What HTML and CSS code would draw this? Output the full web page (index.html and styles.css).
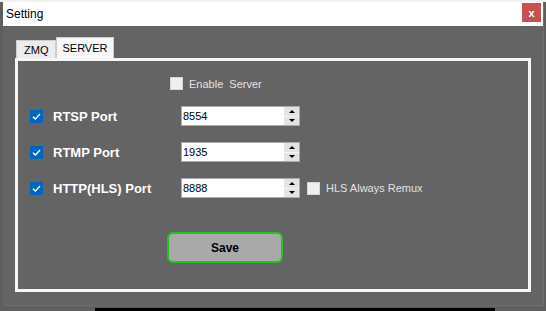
FILE: index.html
```html
<!DOCTYPE html>
<html lang="en">

<head>
    <meta charset="UTF-8">
    <title>Setting</title>
    <link rel="stylesheet" href="styles.css">
</head>

<body>
    <div class="desk-top"></div>
    <div class="window">
        <div class="titlebar">
            <span class="title">Setting</span>
            <div class="close">x</div>
        </div>
        <div class="content">
            <div class="tabs">
                <div class="tab">ZMQ</div>
                <div class="tab active">SERVER</div>
            </div>
            <div class="panel">
                <div class="enable-row">
                    <span class="check"></span>
                    <span class="opt-label">Enable&nbsp; Server</span>
                </div>
                <div class="row">
                    <span class="check on"><svg width="13" height="13" viewBox="0 0 13 13"><path d="M3 6.8 L5.4 9 L10 4" fill="none" stroke="#fff" stroke-width="1.4"/></svg></span>
                    <span class="port-label">RTSP Port</span>
                    <div class="spinbox">
                        <span class="value">8554</span>
                        <div class="spin"><span class="up"></span><span class="down"></span></div>
                    </div>
                </div>
                <div class="row">
                    <span class="check on"><svg width="13" height="13" viewBox="0 0 13 13"><path d="M3 6.8 L5.4 9 L10 4" fill="none" stroke="#fff" stroke-width="1.4"/></svg></span>
                    <span class="port-label">RTMP Port</span>
                    <div class="spinbox">
                        <span class="value">1935</span>
                        <div class="spin"><span class="up"></span><span class="down"></span></div>
                    </div>
                </div>
                <div class="row">
                    <span class="check on"><svg width="13" height="13" viewBox="0 0 13 13"><path d="M3 6.8 L5.4 9 L10 4" fill="none" stroke="#fff" stroke-width="1.4"/></svg></span>
                    <span class="port-label">HTTP(HLS) Port</span>
                    <div class="spinbox">
                        <span class="value">8888</span>
                        <div class="spin"><span class="up"></span><span class="down"></span></div>
                    </div>
                    <span class="check hls"></span>
                    <span class="opt-label">HLS Always Remux</span>
                </div>
                <button class="save">Save</button>
            </div>
        </div>
    </div>
    <div class="desk-bar"></div>
</body>

</html>
```

FILE: styles.css
```css
body,
html {
    margin: 0;
    padding: 0;
    width: 546px;
    height: 311px;
    overflow: hidden;
    background: #5f5f5f;
    font-family: "Liberation Sans", Arial, sans-serif;
}

.desk-top {
    height: 2px;
    background: #f2f2f2;
}

.window {
    margin-left: 3px;
    width: 540px;
    height: 303px;
    background: #646464;
    box-shadow: 1px 1px 0 #6f6f6f;
}

.titlebar {
    height: 24px;
    background: #fff;
    display: flex;
    justify-content: space-between;
    align-items: center;
}

.title {
    padding-left: 3px;
    font-size: 12px;
    color: #000;
}

.close {
    align-self: flex-start;
    margin-top: 1px;
    margin-right: 2px;
    width: 19px;
    height: 19px;
    background: #c75050;
    color: #fff;
    font-size: 11px;
    font-weight: bold;
    display: flex;
    align-items: center;
    justify-content: center;
}

.content {
    padding: 11px 0 0 12px;
}

.tabs {
    display: flex;
    align-items: flex-end;
    height: 21px;
    margin-left: 1px;
}

.tab {
    height: 18px;
    padding: 0 7px;
    box-sizing: border-box;
    border: 1px solid #cdcdcd;
    border-bottom: none;
    background: #ececec;
    font-size: 11px;
    color: #000;
    display: flex;
    align-items: center;
}

.tab.active {
    height: 21px;
    padding: 0 5px;
    background: #f8f8f8;
}

.panel {
    width: 516px;
    height: 234px;
    box-sizing: border-box;
    border: 3px solid #f6f6f6;
    background: #646464;
}

.enable-row {
    display: flex;
    align-items: center;
    margin-top: 16px;
    padding-left: 152px;
    height: 13px;
}

.check {
    width: 13px;
    height: 13px;
    box-sizing: border-box;
    background: #efefef;
    border: 1px solid #d6d6d6;
    flex-shrink: 0;
}

.check.on {
    background: #0067c0;
    border: none;
}

.check svg {
    display: block;
}

.opt-label {
    margin-left: 6px;
    font-size: 11px;
    color: #e2e2e2;
    white-space: nowrap;
}

.row {
    display: flex;
    align-items: center;
    height: 20px;
    margin-top: 16px;
    padding-left: 12px;
}

.port-label {
    width: 128px;
    margin-left: 10px;
    font-size: 13px;
    font-weight: bold;
    color: #fff;
}

.spinbox {
    width: 119px;
    height: 20px;
    box-sizing: border-box;
    border: 1px solid #ababab;
    background: #fff;
    display: flex;
    align-items: center;
    justify-content: space-between;
}

.value {
    padding-left: 1px;
    font-size: 11px;
    color: #000;
}

.spin {
    width: 15px;
    height: 18px;
    display: flex;
    flex-direction: column;
    gap: 1px;
    background: #f4f4f4;
}

.spin span {
    flex: 1;
    background: #e3e3e3;
    display: flex;
    align-items: center;
    justify-content: center;
}

.spin .up::after {
    content: "";
    border-left: 3px solid transparent;
    border-right: 3px solid transparent;
    border-bottom: 3px solid #000;
}

.spin .down::after {
    content: "";
    border-left: 3px solid transparent;
    border-right: 3px solid transparent;
    border-top: 3px solid #000;
}

.check.hls {
    margin-left: 7px;
}

.save {
    display: block;
    margin: 34px 0 0 149px;
    width: 116px;
    height: 31px;
    border: 2px solid #22c322;
    border-radius: 6px;
    background: #a9a9a9;
    font-family: "Liberation Sans", Arial, sans-serif;
    font-size: 12px;
    font-weight: bold;
    color: #000;
}

.desk-bar {
    margin: 3px 0 0 95px;
    width: 400px;
    height: 3px;
    background: #000;
}
```
